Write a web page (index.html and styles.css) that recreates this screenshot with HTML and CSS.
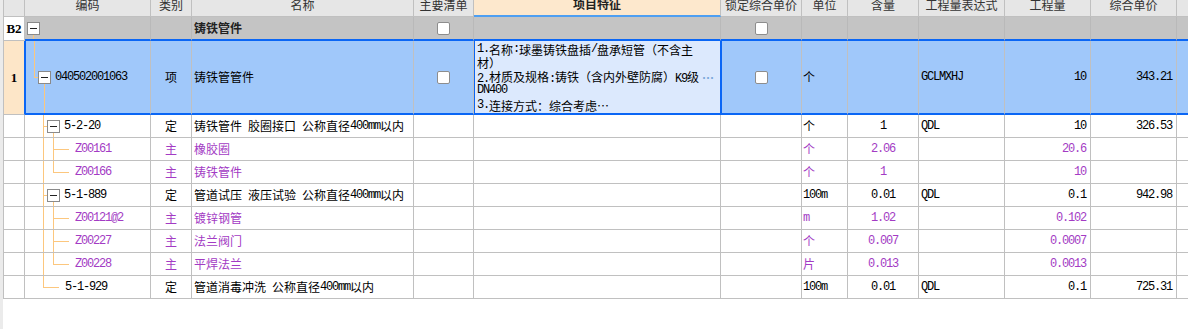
FILE: index.html
```html
<!DOCTYPE html>
<html lang="zh-CN">
<head>
    <meta charset="UTF-8">
    <title>清单定额</title>
    <link rel="stylesheet" href="styles.css">
</head>
<body>
    <div class="page">
        <div class="grid">
            <!-- header -->
            <div class="row head">
                <div class="cell rh"></div>
                <div class="cell">编码</div>
                <div class="cell">类别</div>
                <div class="cell">名称</div>
                <div class="cell">主要清单</div>
                <div class="cell feat-head">项目特征</div>
                <div class="cell">锁定综合单价</div>
                <div class="cell">单位</div>
                <div class="cell">含量</div>
                <div class="cell">工程量表达式</div>
                <div class="cell">工程量</div>
                <div class="cell">综合单价</div>
                <div class="cell"></div>
            </div>

            <!-- 分部 -->
            <div class="row part">
                <div class="cell rh">B2</div>
                <div class="cell code"><i class="node root down"><b class="box"></b></i></div>
                <div class="cell"></div>
                <div class="cell name bold">铸铁管件</div>
                <div class="cell mid"><span class="check"></span></div>
                <div class="cell"></div>
                <div class="cell mid"><span class="check"></span></div>
                <div class="cell"></div><div class="cell"></div><div class="cell"></div>
                <div class="cell"></div><div class="cell"></div><div class="cell"></div>
            </div>

            <!-- 清单 (selected) -->
            <div class="row sel">
                <div class="cell rh">1</div>
                <div class="cell code"><i class="g end"></i><i class="node down"><b class="box"></b></i><span class="n txt">040502001063</span></div>
                <div class="cell mid">项</div>
                <div class="cell name">铸铁管管件</div>
                <div class="cell mid"><span class="check"></span></div>
                <div class="cell feat">
                    <div class="fl"><span class="n">1.</span>名称<span class="n">:</span>球墨铸铁盘插<span class="n">/</span>盘承短管（不含主</div>
                    <div class="fl">材）</div>
                    <div class="fl item"><span><span class="n">2.</span>材质及规格<span class="n">:</span>铸铁（含内外壁防腐）<span class="n">K9</span>级</span><span class="dots">⋯</span></div>
                    <div class="fl"><span class="n">DN400</span></div>
                    <div class="fl item"><span class="n">3.</span>连接方式：综合考虑⋯</div>
                </div>
                <div class="cell mid lock"><span class="check"></span></div>
                <div class="cell unit">个</div>
                <div class="cell"></div>
                <div class="cell n expr">GCLMXHJ</div>
                <div class="cell n num">10</div>
                <div class="cell n num">343.21</div>
                <div class="cell"></div>
            </div>

            <div class="row">
                <div class="cell rh"></div>
                <div class="cell code"><i class="g"></i><i class="g pass"></i><i class="node down"><b class="box"></b></i><span class="n txt">5-2-20</span></div>
                <div class="cell mid">定</div>
                <div class="cell name">铸铁管件<span class="n">&nbsp;</span>胶圈接口<span class="n">&nbsp;</span>公称直径<span class="n">400mm</span>以内</div>
                <div class="cell"></div><div class="cell"></div><div class="cell"></div>
                <div class="cell unit">个</div>
                <div class="cell n mid">1</div>
                <div class="cell n expr">QDL</div>
                <div class="cell n num">10</div>
                <div class="cell n num">326.53</div>
                <div class="cell"></div>
            </div>
            <div class="row mat">
                <div class="cell rh"></div>
                <div class="cell code"><i class="g"></i><i class="g pass"></i><i class="g pass"></i><i class="node leaf"></i><span class="n txt">Z00161</span></div>
                <div class="cell mid">主</div>
                <div class="cell name">橡胶圈</div>
                <div class="cell"></div><div class="cell"></div><div class="cell"></div>
                <div class="cell unit">个</div>
                <div class="cell n mid">2.06</div>
                <div class="cell"></div>
                <div class="cell n num">20.6</div>
                <div class="cell"></div><div class="cell"></div>
            </div>
            <div class="row mat">
                <div class="cell rh"></div>
                <div class="cell code"><i class="g"></i><i class="g pass"></i><i class="g end"></i><i class="node leaf"></i><span class="n txt">Z00166</span></div>
                <div class="cell mid">主</div>
                <div class="cell name">铸铁管件</div>
                <div class="cell"></div><div class="cell"></div><div class="cell"></div>
                <div class="cell unit">个</div>
                <div class="cell n mid">1</div>
                <div class="cell"></div>
                <div class="cell n num">10</div>
                <div class="cell"></div><div class="cell"></div>
            </div>

            <div class="row">
                <div class="cell rh"></div>
                <div class="cell code"><i class="g"></i><i class="g pass"></i><i class="node down"><b class="box"></b></i><span class="n txt">5-1-889</span></div>
                <div class="cell mid">定</div>
                <div class="cell name">管道试压<span class="n">&nbsp;</span>液压试验<span class="n">&nbsp;</span>公称直径<span class="n">400mm</span>以内</div>
                <div class="cell"></div><div class="cell"></div><div class="cell"></div>
                <div class="cell unit n">100m</div>
                <div class="cell n mid">0.01</div>
                <div class="cell n expr">QDL</div>
                <div class="cell n num">0.1</div>
                <div class="cell n num">942.98</div>
                <div class="cell"></div>
            </div>
            <div class="row mat">
                <div class="cell rh"></div>
                <div class="cell code"><i class="g"></i><i class="g pass"></i><i class="g pass"></i><i class="node leaf"></i><span class="n txt">Z00121@2</span></div>
                <div class="cell mid">主</div>
                <div class="cell name">镀锌钢管</div>
                <div class="cell"></div><div class="cell"></div><div class="cell"></div>
                <div class="cell unit n">m</div>
                <div class="cell n mid">1.02</div>
                <div class="cell"></div>
                <div class="cell n num">0.102</div>
                <div class="cell"></div><div class="cell"></div>
            </div>
            <div class="row mat">
                <div class="cell rh"></div>
                <div class="cell code"><i class="g"></i><i class="g pass"></i><i class="g pass"></i><i class="node leaf"></i><span class="n txt">Z00227</span></div>
                <div class="cell mid">主</div>
                <div class="cell name">法兰阀门</div>
                <div class="cell"></div><div class="cell"></div><div class="cell"></div>
                <div class="cell unit">个</div>
                <div class="cell n mid">0.007</div>
                <div class="cell"></div>
                <div class="cell n num">0.0007</div>
                <div class="cell"></div><div class="cell"></div>
            </div>
            <div class="row mat">
                <div class="cell rh"></div>
                <div class="cell code"><i class="g"></i><i class="g pass"></i><i class="g end"></i><i class="node leaf"></i><span class="n txt">Z00228</span></div>
                <div class="cell mid">主</div>
                <div class="cell name">平焊法兰</div>
                <div class="cell"></div><div class="cell"></div><div class="cell"></div>
                <div class="cell unit">片</div>
                <div class="cell n mid">0.013</div>
                <div class="cell"></div>
                <div class="cell n num">0.0013</div>
                <div class="cell"></div><div class="cell"></div>
            </div>

            <div class="row">
                <div class="cell rh"></div>
                <div class="cell code"><i class="g"></i><i class="g end"></i><i class="node leaf"></i><span class="n txt">5-1-929</span></div>
                <div class="cell mid">定</div>
                <div class="cell name">管道消毒冲洗<span class="n">&nbsp;</span>公称直径<span class="n">400mm</span>以内</div>
                <div class="cell"></div><div class="cell"></div><div class="cell"></div>
                <div class="cell unit n">100m</div>
                <div class="cell n mid">0.01</div>
                <div class="cell n expr">QDL</div>
                <div class="cell n num">0.1</div>
                <div class="cell n num">725.31</div>
                <div class="cell"></div>
            </div>
        </div>
    </div>
</body>
</html>
```

FILE: styles.css
```css
html, body {
    margin: 0;
    height: 100%;
    overflow: hidden;
    background: #fff;
}

body {
    font-family: "Noto Sans CJK SC", sans-serif;
    font-size: 12px;
    color: #000;
}

.page {
    border-left: 3px solid #ebebeb;
    height: 100%;
    overflow: hidden;
}

/* grid */
.grid {
    width: 1214px;
    margin-top: -7px;
}

.row {
    display: grid;
    grid-template-columns: 22px 126px 41px 222px 60px 247px 81px 46px 71px 86px 86px 86px 40px;
    height: 23px;
}

.cell {
    box-sizing: border-box;
    display: flex;
    align-items: center;
    border-right: 1px solid #c0c0c0;
    border-bottom: 1px solid #c0c0c0;
    white-space: nowrap;
    overflow: hidden;
    line-height: 14px;
}

.cell.rh {
    justify-content: center;
    border-left: 1px solid #c0c0c0;
    font-family: "Liberation Serif", serif;
    font-weight: bold;
    font-size: 13px;
    background: #fff;
}

/* header */
.head {
    height: 24px;
}

.head .cell {
    justify-content: center;
    background: #e6e6e6;
    color: #333;
}

.head .cell.feat-head {
    background: #fde8cd;
    font-weight: bold;
    color: #222;
    border-bottom: 2px solid #4e9ff2;
}

/* 分部 row */
.part {
    height: 24px;
}

.part .cell {
    background: #c4c4c4;
    border-right-color: #b9b9b9;
    border-bottom: 2px solid #0a66f5;
}

.part .cell.rh {
    background: #fff;
    border-right-color: #c0c0c0;
    border-bottom: 1px solid #c0c0c0;
}

.part .bold {
    font-weight: bold;
    color: #222;
}

/* selected row */
.sel {
    height: 74px;
}

.sel .cell {
    background: #a0c8fa;
    border-bottom: 2px solid #0a66f5;
}

.sel .cell.rh {
    background: #fde6c8;
    border-right-color: #0a66f5;
    border-bottom: 1px solid #c0c0c0;
}

.sel .cell.code {
    border-left: 1px solid #0a66f5;
}

.sel .cell.feat {
    display: block;
    background: #dce9fd;
    border-left: 1px solid #0a66f5;
    border-right: 1px solid #0a66f5;
    padding: 2px 0 0 2px;
}

.sel .cell.lock {
    border-left: 1px solid #0a66f5;
}

.fl {
    height: 13px;
    line-height: 13px;
    display: flex;
    align-items: center;
}

.fl.item {
    margin-top: 2px;
}

.fl .dots {
    margin-left: auto;
    margin-right: 6px;
    color: #79a6d8;
    font-weight: bold;
}

/* cell content */
.n {
    font-family: "Liberation Mono", monospace;
    font-size: 12px;
    letter-spacing: -1.2px;
}

.mid { justify-content: center; }
.name { padding-left: 2px; }
.unit { padding-left: 1px; }
.expr { padding-left: 2px; }
.num { justify-content: flex-end; padding-right: 4px; }

.mat .cell {
    color: #a33bc4;
}

/* checkboxes */
.check {
    width: 13px;
    height: 13px;
    box-sizing: border-box;
    border: 1px solid #8d8d8d;
    border-radius: 2px;
    background: #fff;
}

/* tree column */
.cell.code {
    align-items: stretch;
}

.g {
    position: relative;
    width: 10px;
    flex: none;
}

.g.pass::before,
.g.end::before,
.node::before,
.node.down::after {
    content: "";
    position: absolute;
}

.g.pass::before {
    left: 8px;
    top: 0;
    bottom: 0;
    border-left: 1px solid #fcc77e;
}

.g.end::before {
    left: 8px;
    top: 0;
    height: 50%;
    border-left: 1px solid #fcc77e;
}

.node {
    position: relative;
    width: 15px;
    flex: none;
    display: flex;
    align-items: center;
}

.node::before {
    left: -2px;
    top: 50%;
    width: 4px;
    border-top: 1px solid #fcc77e;
}

.node.root::before {
    display: none;
}

.node.leaf::before {
    width: 16px;
}

.node.down::after {
    left: 8px;
    top: 50%;
    bottom: 0;
    border-left: 1px solid #fcc77e;
}

.box {
    position: relative;
    z-index: 1;
    margin-left: 2px;
    width: 13px;
    height: 13px;
    box-sizing: border-box;
    border: 1px solid #8a8a8a;
    background: #fff;
}

.box::after {
    content: "";
    position: absolute;
    left: 2px;
    right: 2px;
    top: 5px;
    border-top: 1px solid #222;
}

.txt {
    align-self: center;
    margin-left: 4px;
}

.node.leaf + .txt {
    margin-left: 5px;
}
```
